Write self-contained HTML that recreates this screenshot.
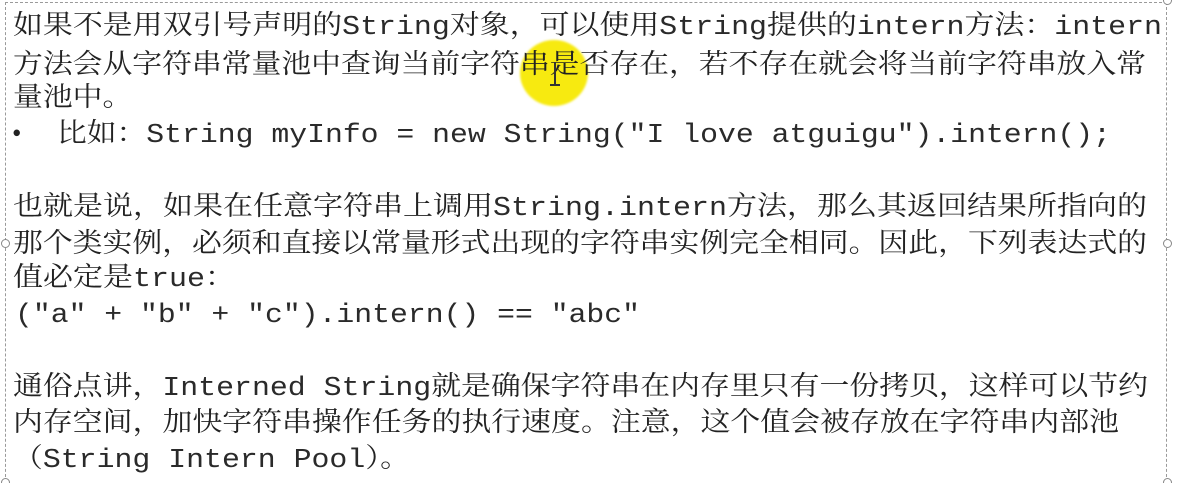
<!DOCTYPE html>
<html><head><meta charset="utf-8"><style>
html,body{margin:0;padding:0;background:#fff;width:1181px;height:483px;overflow:hidden;position:relative}
.box{position:absolute;left:5px;top:2px;width:1162px;height:490px;border:1px dashed #9a9a9a;box-sizing:border-box}
.h{position:absolute;width:9px;height:9px;border:1px solid #888;border-radius:50%;background:#fff;box-sizing:border-box}
.l{position:absolute;white-space:nowrap;font-family:"Liberation Serif","Noto Serif CJK SC",serif;font-size:27px;color:#222;line-height:30px;transform-origin:0 50%}
.m{font-family:"Liberation Mono",monospace;color:#2a2a2a}
.hl{position:absolute;left:520px;top:40px;width:68px;height:66px;border-radius:50%;background:#f7ea10;filter:blur(1px)}
</style></head><body>
<div class="box"></div>
<div class="h" style="left:1px;top:239px"></div>
<div class="h" style="left:1163px;top:239px"></div>
<div class="h" style="left:1163px;top:-4px"></div>
<div class="h" style="left:1163px;top:478px"></div>
<div class="h" style="left:1px;top:478px"></div>
<div class="hl"></div>
<div class="l" id="a1" style="left:13px;top:10px">如果不是用双引号声明的<span class="m">String</span>对象，可以使用<span class="m">String</span>提供的<span class="m">intern</span>方法：<span class="m">intern</span></div>
<div class="l" id="a2" style="left:13px;top:49px">方法会从字符串常量池中查询当前字符串是否存在，若不存在就会将当前字符串放入常</div>
<div class="l" id="a3" style="left:13px;top:82px">量池中。</div>
<div class="l" style="left:12px;top:118px">•</div>
<div class="l" id="a4" style="left:57px;top:118px">比如：<span class="m">String myInfo = new String("I love atguigu").intern();</span></div>
<div class="l" id="a5" style="left:13px;top:191px">也就是说，如果在任意字符串上调用<span class="m">String.intern</span>方法，那么其返回结果所指向的</div>
<div class="l" id="a6" style="left:13px;top:228px">那个类实例，必须和直接以常量形式出现的字符串实例完全相同。因此，下列表达式的</div>
<div class="l" id="a7" style="left:13px;top:262px">值必定是<span class="m">true</span>：</div>
<div class="l" id="a8" style="left:15px;top:298px"><span class="m">("a" + "b" + "c").intern() == "abc"</span></div>
<div class="l" id="a9" style="left:13px;top:371px">通俗点讲，<span class="m">Interned String</span>就是确保字符串在内存里只有一份拷贝，这样可以节约</div>
<div class="l" id="a10" style="left:13px;top:407px">内存空间，加快字符串操作任务的执行速度。注意，这个值会被存放在字符串内部池</div>
<div class="l" id="a11" style="left:13px;top:443px">（<span class="m">String Intern Pool</span>）。</div>
<div style="position:absolute;left:554px;top:62px;width:2px;height:24px;background:#333"></div>
<div style="position:absolute;left:550px;top:84px;width:10px;height:2px;background:#333"></div>
<script>
var t={a1:[13,1162],a2:[13,1146],a4:[57,1111],a5:[13,1147],a6:[13,1147],a8:[15,640],a9:[13,1148],a10:[13,1119],a11:[13,410]};
var def={a3:'a2',a7:'a5'};
var sc={};
for(var k in t){var e=document.getElementById(k);var w=e.getBoundingClientRect().width;var s=(t[k][1]-t[k][0])/w;sc[k]=s;e.style.transform='scaleX('+s+')';}
for(var k in def){document.getElementById(k).style.transform='scaleX('+sc[def[k]]+')';}
</script>
</body></html>
